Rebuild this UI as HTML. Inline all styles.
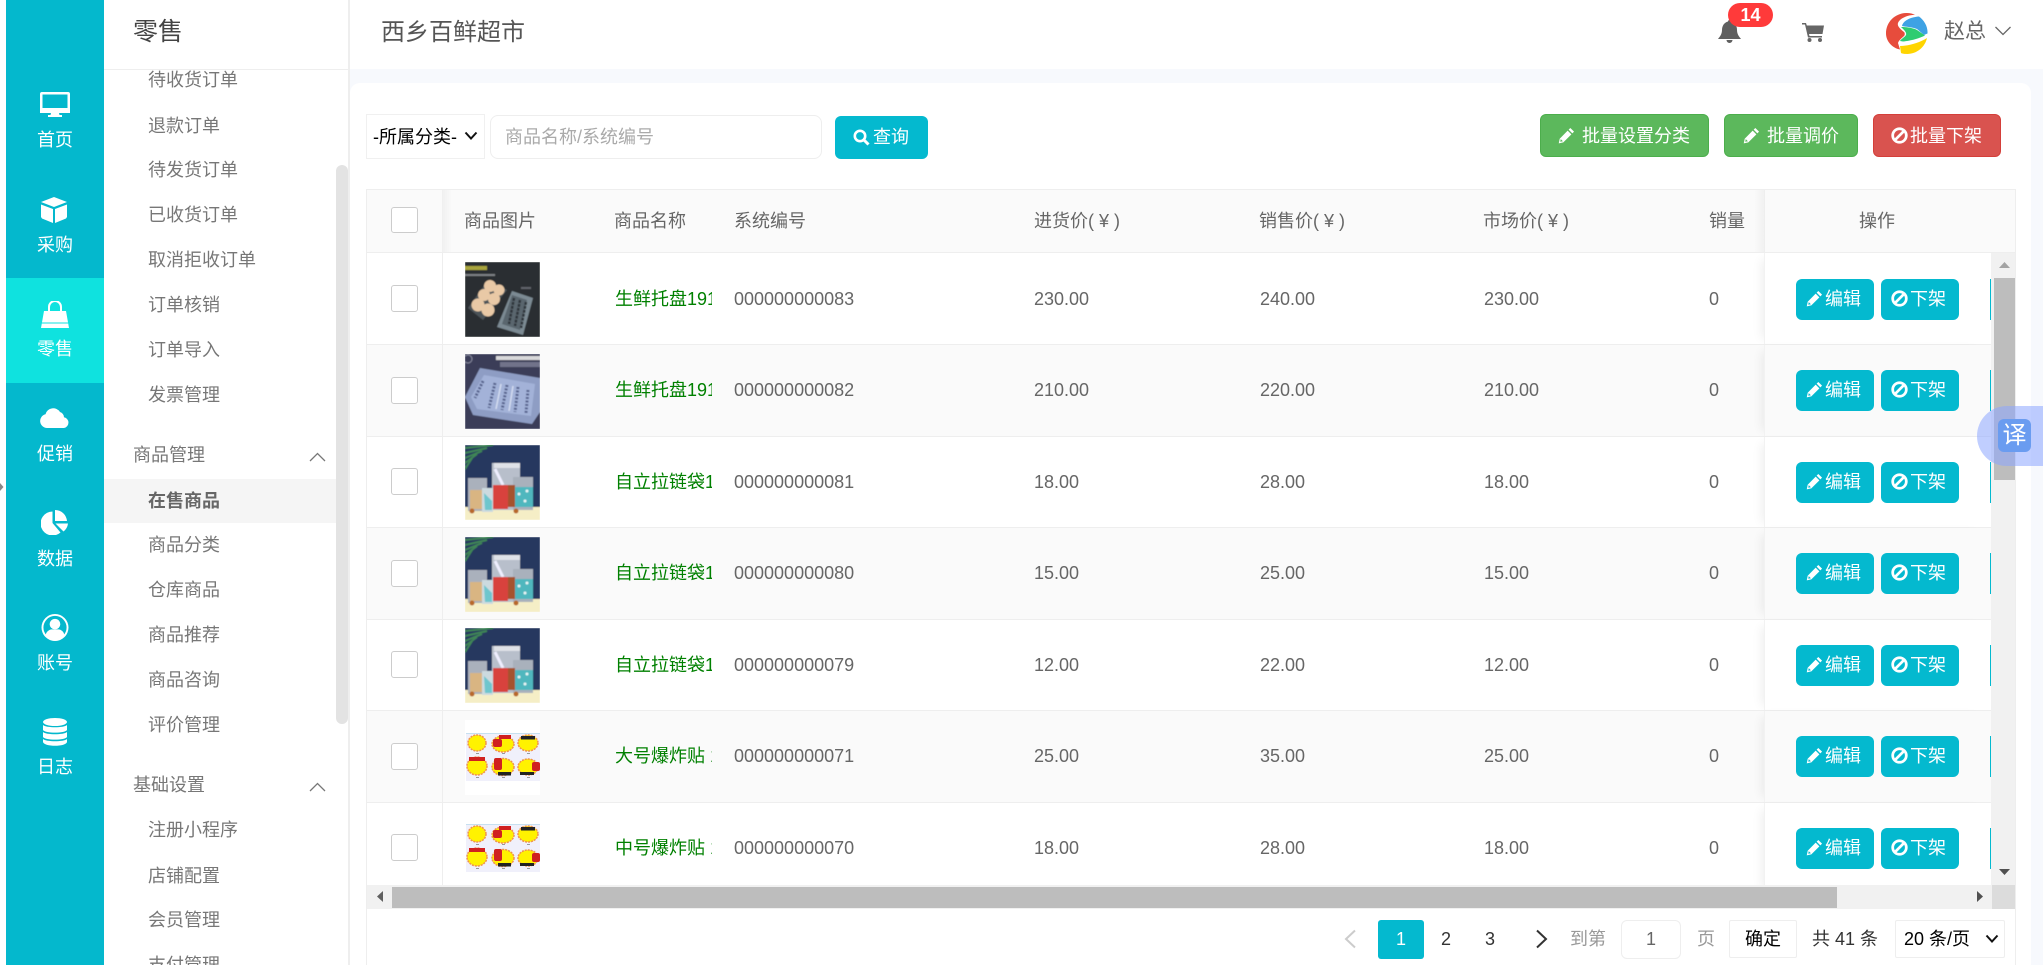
<!DOCTYPE html>
<html lang="zh"><head><meta charset="utf-8"><title>西乡百鲜超市</title>
<style>
*{box-sizing:border-box;margin:0;padding:0}
html,body{width:2043px;height:965px;overflow:hidden;background:#fff}
body{position:relative;font:18px/24px "Liberation Sans","Noto Sans CJK SC",sans-serif;color:#666}
.a{position:absolute}
.t{position:absolute;white-space:nowrap;line-height:24px}
#rail{left:6px;top:0;width:98px;height:965px;background:#04b8cd}
.rl{position:absolute;left:6px;width:98px;text-align:center;color:#fff;line-height:24px}
.ri{position:absolute;fill:#fff}
.m{position:absolute;line-height:24px;color:#777;white-space:nowrap}
.s{position:absolute;line-height:24px;color:#777}
#hdr{left:350px;top:0;width:1693px;height:69px;background:#fff}
#bg{left:350px;top:69px;width:1693px;height:896px;background:#f7f9fd}
#card{left:350px;top:83px;width:1681px;height:882px;background:#fff;border-radius:10px 10px 0 0}
.btn{position:absolute;border-radius:6px;color:#fff;white-space:nowrap}
.btn svg{position:absolute}
.btn span{position:absolute;line-height:24px}
#thead{left:366px;top:189px;width:1650px;height:64px;background:#fafafa;border:1px solid #eee}
.th{position:absolute;top:209px;line-height:24px;color:#666}
#b{left:367px;top:253px;width:1624px;height:632px;overflow:hidden}
.r{position:absolute;left:0;width:1624px;height:92px;border-top:1px solid #eee;background:#fff}
.r.o{background:#fafafa}
.r i{position:absolute;font-style:normal;top:0;line-height:91px;white-space:nowrap;color:#666}
.r i.n{left:248px;width:97px;overflow:hidden;color:#008000}
.ck{position:absolute;left:24px;width:27px;height:27px;border:1px solid #ccc;border-radius:3px;background:#fff}
.r svg.im{position:absolute;left:98px;width:75px;height:75px}
.cl{position:absolute;left:0;top:0;width:76px;height:92px;border-right:1px solid #eee}
.fx{position:absolute;left:1397px;top:0;width:227px;height:92px;border-left:1px solid #f2f2f2;background:inherit;box-shadow:-8px 0 10px -6px rgba(0,0,0,.07)}
.e{position:absolute;top:25px;width:78px;height:41px;background:#04b9cf;border-radius:6px;color:#fff;line-height:41px}
.e svg{position:absolute;left:10px;top:11px}
.e span{position:absolute;left:29px;top:0;white-space:nowrap}
.sl{position:absolute;left:225px;top:25px;width:1px;height:41px;background:#04b9cf}
</style></head><body>
<svg width="0" height="0" style="position:absolute"><defs>
<filter id="bl" x="0" y="0" width="100%" height="100%"><feGaussianBlur stdDeviation=".5"/></filter>
<symbol id="pen" viewBox="0 0 16 16"><path fill="#fff" d="M11.6.9l3.5 3.5-1.6 1.6-3.5-3.5zM9.1 3.4l3.5 3.500-7.600 7.600-4.300.9.900-4.400zM2.600 11.400l-.500 2.500 2.500-.500z"/></symbol>
<symbol id="ban" viewBox="0 0 16 16"><circle cx="8" cy="8" r="6.400" fill="none" stroke="#fff" stroke-width="2.600"/><path d="M3.600 12.400L12.400 3.600" stroke="#fff" stroke-width="2.600"/></symbol>
<symbol id="t1" viewBox="0 0 75 75"><g filter="url(#bl)"><rect width="75" height="75" fill="#2b2f33"/><rect x="0" y="4" width="22" height="4" fill="#a9a53c"/><rect x="0" y="12" width="30" height="2" fill="#7d8083"/><rect x="56" y="25" width="10" height="2" fill="#60646a"/><path d="M3 46L23 18 42 28 18 58Z" fill="#4c5359"/><g fill="#e9c9a6"><circle cx="25" cy="24" r="6"/><circle cx="34" cy="28" r="5.500"/><circle cx="19" cy="33" r="6"/><circle cx="29" cy="37" r="6"/><circle cx="13" cy="43" r="6.500"/><circle cx="23" cy="48" r="6.500"/></g><path d="M47 29L68 36 58 73 32 65Z" fill="#7b8a93"/><path d="M47 33L62 38 55 68 37 62Z" fill="#5a666e"/><path d="M49 36L44 62M55 38L50 64M61 40L56 66" stroke="#2e353a" stroke-width="2.500" stroke-dasharray="3 1"/></g></symbol>
<symbol id="t2" viewBox="0 0 75 75"><g filter="url(#bl)"><rect width="75" height="75" fill="#3a3d58"/><circle cx="3" cy="5" r="4" fill="none" stroke="#8a8ca0"/><rect x="31" y="2" width="44" height="4" fill="#d8d8da"/><rect x="35" y="8" width="40" height="5" fill="#71738a"/><path d="M15 14L75 24V58L67 70 8 61 0 43Z" fill="#8e9dc4"/><path d="M19 21L70 30 66 62 12 55 6 43Z" fill="#a3b2d8"/><g stroke="#54618b" stroke-width="3" stroke-dasharray="2 1.500"><path d="M30 29L24 54M42 31L37 56M53 33L50 58M18 27L10 44M63 36L61 59"/></g><g stroke="#d3dcf0" stroke-width="1.500"><path d="M36 30L31 55M48 32L44 57"/></g></g></symbol>
<symbol id="t3" viewBox="0 0 75 75"><g filter="url(#bl)"><rect width="75" height="75" fill="#26395f"/><rect y="62" width="75" height="13" fill="#f5eec6"/><g stroke="#3f8556" stroke-width="2" fill="none"><path d="M0 3L28 0M0 8L22 3M0 13L17 6M0 18L12 9M0 24L7 13"/></g><rect x="27" y="18" width="28" height="47" fill="#b8bfcb"/><rect x="29" y="18" width="26" height="5" fill="#dfe2e7"/><path d="M30 24L38 40" stroke="#eef" stroke-width="3"/><rect x="3" y="33" width="19" height="33" fill="#aab1bc"/><rect x="48" y="32" width="20" height="33" fill="#a9b1bc"/><rect x="5" y="45" width="12" height="19" fill="#d9b582"/><rect x="17" y="43" width="11" height="24" fill="#ccdadf"/><path d="M19 48L27 56V65H20Z" fill="#6ec6cd"/><rect x="28" y="40" width="15" height="24" fill="#d8423d"/><rect x="43" y="40" width="7" height="22" fill="#a5522d"/><rect x="50" y="42" width="18" height="20" fill="#4fb7be"/><g fill="#e6f5f5"><circle cx="54" cy="49" r="1.500"/><circle cx="62" cy="46" r="1.500"/><circle cx="60" cy="56" r="1.500"/></g><circle cx="7" cy="66" r="2.500" fill="#b8672a"/><circle cx="51" cy="66" r="2.500" fill="#b8672a"/></g></symbol>
<symbol id="t4" viewBox="0 0 75 75"><rect width="75" height="75" fill="#fff"/><rect x="1" y="13" width="74" height="48" fill="#f0f0fb"/><rect x="1" y="13" width="74" height="1" fill="#c7e0f0"/><g fill="#fff200" stroke="#f09050" stroke-width="1.500" stroke-dasharray="2 1"><ellipse cx="12" cy="23" rx="9" ry="8"/><ellipse cx="38" cy="24" rx="11" ry="8"/><ellipse cx="63" cy="23" rx="10" ry="8"/><ellipse cx="12" cy="46" rx="10" ry="9"/><ellipse cx="38" cy="47" rx="11" ry="8.500"/><ellipse cx="63" cy="47" rx="10" ry="8"/></g><g fill="#d02020"><rect x="28" y="19" width="9" height="8" rx="2"/><rect x="34" y="15" width="12" height="4"/><rect x="29" y="38" width="8" height="12" rx="2"/><rect x="67" y="42" width="8" height="9" rx="2"/><rect x="4" y="37" width="16" height="4"/></g><g fill="#222"><rect x="56" y="16" width="14" height="3.500"/><rect x="33" y="52" width="13" height="3.500"/><rect x="55" y="52" width="14" height="3"/></g><g fill="#999"><rect x="11" y="33" width="3" height="1"/><rect x="37" y="33" width="3" height="1"/><rect x="62" y="33" width="3" height="1"/><rect x="11" y="57" width="3" height="1"/><rect x="37" y="57" width="3" height="1"/><rect x="62" y="57" width="3" height="1"/></g></symbol>
</defs></svg>

<div class="a" id="rail"></div>
<div class="a" style="left:6px;top:278px;width:98px;height:105px;background:#0fe2df"></div>
<svg class="a" style="left:0;top:481px" width="4" height="12"><path d="M0 2l3.500 4L0 10z" fill="#888"/></svg>

<svg class="ri" style="left:40px;top:92px" width="30" height="25" viewBox="0 0 30 25"><path fill-rule="evenodd" d="M2 0h26a2 2 0 0 1 2 2v17a2 2 0 0 1-2 2H19l.500 2H22v2H8v-2h2.500l.500-2H2a2 2 0 0 1-2-2V2a2 2 0 0 1 2-2zM2.500 2.500v13.500h25V2.500z"/><rect x="0" y="17" width="30" height="4"/></svg>
<svg class="ri" style="left:41px;top:197px" width="26" height="26" viewBox="0 0 26 26"><path d="M13 0L26 5 13 10 0 5zM0 7.500L12 12v14L1 21.500 0 20zM26 7.500L14 12v14l11-4.500 1-1.500z"/></svg>
<svg class="ri" style="left:41px;top:301px" width="28" height="27" viewBox="0 0 28 27"><path fill-rule="evenodd" d="M3 10h4V6a7 7 0 0 1 14 0v4h4l3 17H0zM9 10h10V6a5 5 0 0 0-10 0z"/><rect y="21.500" width="28" height="1" fill="#0fe2df"/></svg>
<svg class="ri" style="left:40px;top:407px" width="30" height="21" viewBox="0 0 30 21"><path d="M7 21a7 7 0 0 1-1.500-13.800A8 8 0 0 1 20 5a5.500 5.500 0 0 1 4 5.200A5.500 5.500 0 0 1 24 21z"/></svg>
<svg class="ri" style="left:41px;top:510px" width="27" height="25" viewBox="0 0 27 25"><path d="M11.500 1.500V13l8 9.500A12 12 0 1 1 11.500 1.500zM14 0a12 12 0 0 1 12 11H14zM14.500 13.500H27a12 12 0 0 1-4.500 8z"/></svg>
<svg class="ri" style="left:41px;top:614px" width="28" height="27" viewBox="0 0 28 28"><path fill-rule="evenodd" d="M14 0a14 14 0 1 1 0 28 14 14 0 0 1 0-28zM14 2a12 12 0 1 0 0 24 12 12 0 0 0 0-24z"/><circle cx="14" cy="10.500" r="5.500"/><path d="M4 22.500c1-5 5-6.500 6.500-6.500h7c2 0 5.500 1.500 6.500 6.500a12 12 0 0 1-20 0z"/></svg>
<svg class="ri" style="left:43px;top:718px" width="24" height="28" viewBox="0 0 24 28"><ellipse cx="12" cy="4" rx="12" ry="4"/><path d="M0 7c3 3 21 3 24 0v5c-2 3.500-22 3.500-24 0zM0 14c3 3 21 3 24 0v5c-2 3.500-22 3.500-24 0zM0 21c3 3 21 3 24 0v3c-1 5-23 5-24 0z"/></svg>

<div class="rl" style="top:128px">首页</div><div class="rl" style="top:233px">采购</div><div class="rl" style="top:337px">零售</div><div class="rl" style="top:442px">促销</div><div class="rl" style="top:547px">数据</div><div class="rl" style="top:651px">账号</div><div class="rl" style="top:755px">日志</div>

<!-- sidebar -->
<div class="a" style="left:348px;top:0;width:2px;height:965px;background:#eeeeee"></div>
<div class="t" style="left:133px;top:18px;font-size:25px;line-height:28px;color:#444">零售</div>
<div class="a" style="left:104px;top:69px;width:244px;height:1px;background:#eee"></div>
<div class="a" style="left:104px;top:479px;width:232px;height:44px;background:#f5f5f5"></div>
<div class="a" style="left:336px;top:165px;width:12px;height:559px;background:#e3e3e3;border-radius:6px"></div>
<div class="a" style="left:104px;top:70px;width:232px;height:895px;overflow:hidden">
<div class="m" style="left:44px;top:-2px">待收货订单</div>
<div class="m" style="left:44px;top:44px">退款订单</div>
<div class="m" style="left:44px;top:88px">待发货订单</div>
<div class="m" style="left:44px;top:133px">已收货订单</div>
<div class="m" style="left:44px;top:178px">取消拒收订单</div>
<div class="m" style="left:44px;top:223px">订单核销</div>
<div class="m" style="left:44px;top:268px">订单导入</div>
<div class="m" style="left:44px;top:313px">发票管理</div>
<div class="s" style="left:29px;top:373px">商品管理</div>
<div class="m" style="left:44px;top:419px;font-weight:bold;color:#666">在售商品</div>
<div class="m" style="left:44px;top:463px">商品分类</div>
<div class="m" style="left:44px;top:508px">仓库商品</div>
<div class="m" style="left:44px;top:553px">商品推荐</div>
<div class="m" style="left:44px;top:598px">商品咨询</div>
<div class="m" style="left:44px;top:643px">评价管理</div>
<div class="s" style="left:29px;top:703px">基础设置</div>
<div class="m" style="left:44px;top:748px">注册小程序</div>
<div class="m" style="left:44px;top:794px">店铺配置</div>
<div class="m" style="left:44px;top:838px">会员管理</div>
<div class="m" style="left:44px;top:883px">支付管理</div>
</div>
<svg class="a" style="left:309px;top:452px" width="17" height="10"><path d="M1 9l7.500-7.500L16 9" fill="none" stroke="#777" stroke-width="1.300"/></svg>
<svg class="a" style="left:309px;top:782px" width="17" height="10"><path d="M1 9l7.500-7.500L16 9" fill="none" stroke="#777" stroke-width="1.300"/></svg>

<!-- header -->
<div class="a" id="bg"></div><div class="a" id="hdr"></div><div class="a" id="card"></div>
<div class="t" style="left:381px;top:19px;font-size:24px;line-height:28px;color:#555">西乡百鲜超市</div>
<svg class="a" style="left:1718px;top:20px" width="23" height="23" viewBox="0 0 23 23"><path fill="#5f5f5f" d="M11.500 0c1 0 1.500.7 1.500 1.500C17 2.500 19 6 19 10c0 4 2 6.500 4 9H0c2-2.500 4-5 4-9 0-4 2-7.500 6-8.500 0-.8.500-1.500 1.500-1.500zM8.500 20h6a3 3 0 0 1-6 0z"/></svg>
<div class="a" style="left:1728px;top:3px;width:45px;height:24px;border-radius:12px;background:#ff3a3a;color:#fff;font-weight:bold;font-size:18px;line-height:24px;text-align:center">14</div>
<svg class="a" style="left:1802px;top:23px" width="22" height="19" viewBox="0 0 22 19"><path fill="#666" d="M0 0h4l.8 2.500H22l-1.500 8.500H7l.5 2H20v1.500H6L3 1.500H0z"/><circle cx="7.500" cy="17" r="2" fill="#666"/><circle cx="18" cy="17" r="2" fill="#666"/></svg>
<svg class="a" style="left:1886px;top:13px" width="42" height="41" viewBox="0 0 42 41"><path fill="#e74c3c" d="M21 0c3 0 6 .8 8 1.800C22 2 14 5 12 10c-1 3 2 6 6 9 1 1 1 3 0 4-2 2-5 4-6 7l2 6.500C6 35 0 28 0 20.500 0 9 9 0 21 0z"/><path fill="#3ea2e4" d="M16 13C17 7 26 4 33 3.500c5 3.500 9 10 8.500 17L38 22l-7-6c-5-2-11-2-15-3z"/><path fill="#2ecc71" d="M15 14c6 0 12 1 16 3l8 5.500c-6 3-13 5-22 6l-3-.5c1-2 5-4 6-6 1-3-3-6-5-8z"/><path fill="#ffd500" d="M41 25c-2 9-10 16-20 16-3 0-5-.5-6-1l-1-7c8 0 19-3 27-8z"/></svg>
<div class="t" style="left:1944px;top:19px;font-size:21px;line-height:26px;color:#666">赵总</div>
<svg class="a" style="left:1995px;top:26px" width="16" height="10"><path d="M.5 1l7.500 7.500L15.500 1" fill="none" stroke="#666" stroke-width="1.300"/></svg>

<!-- filters -->
<div class="a" style="left:366px;top:114px;width:119px;height:45px;border:1px solid #f0f0f0;background:#fff"></div>
<div class="t" style="left:373px;top:125px;color:#000">-所属分类-</div>
<svg class="a" style="left:464px;top:131px" width="14" height="10"><path d="M1.500 1.500L7 7.500l5.500-6" fill="none" stroke="#111" stroke-width="2"/></svg>
<div class="a" style="left:490px;top:115px;width:332px;height:44px;border:1px solid #eee;border-radius:8px;background:#fff"></div>
<div class="t" style="left:505px;top:125px;color:#aaa">商品名称/系统编号</div>
<div class="btn" style="left:835px;top:116px;width:93px;height:43px;background:#04b9cf">
<svg style="left:18px;top:13px" width="17" height="17" viewBox="0 0 17 17"><circle cx="7" cy="7" r="5.200" fill="none" stroke="#fff" stroke-width="2.600"/><path d="M10.500 10.500L15.500 15.500" stroke="#fff" stroke-width="3"/></svg><span style="left:38px;top:9px">查询</span></div>

<div class="btn" style="left:1540px;top:114px;width:169px;height:43px;background:#5cb85c;border:1px solid #4cae4c">
<svg style="left:17px;top:12px" width="17" height="17"><use href="#pen"/></svg><span style="left:41px;top:9px">批量设置分类</span></div>
<div class="btn" style="left:1724px;top:114px;width:134px;height:43px;background:#5cb85c;border:1px solid #4cae4c">
<svg style="left:18px;top:12px" width="17" height="17"><use href="#pen"/></svg><span style="left:42px;top:9px">批量调价</span></div>
<div class="btn" style="left:1873px;top:114px;width:128px;height:43px;background:#d9534f;border:1px solid #d43f3a">
<svg style="left:17px;top:12px" width="17" height="17"><use href="#ban"/></svg><span style="left:36px;top:9px">批量下架</span></div>

<!-- table -->
<div class="a" style="left:366px;top:189px;width:1px;height:776px;background:#eee"></div>
<div class="a" style="left:2015px;top:189px;width:1px;height:776px;background:#eee"></div>
<div class="a" id="thead"></div>
<div class="a" style="left:442px;top:190px;width:10px;height:62px;background:linear-gradient(90deg,#f0f0f0,#fafafa)"></div>
<div class="a" style="left:1754px;top:190px;width:10px;height:62px;background:linear-gradient(90deg,#fafafa,#f1f1f1)"></div>
<div class="a" style="left:1764px;top:190px;width:1px;height:62px;background:#eee"></div>
<div class="a" style="left:391px;top:207px;width:27px;height:26px;border:1px solid #ccc;border-radius:3px;background:#fff"></div>
<div class="th" style="left:464px">商品图片</div><div class="th" style="left:614px">商品名称</div><div class="th" style="left:734px">系统编号</div><div class="th" style="left:1034px">进货价( ¥ )</div><div class="th" style="left:1259px">销售价( ¥ )</div><div class="th" style="left:1483px">市场价( ¥ )</div><div class="th" style="left:1709px">销量</div><div class="th" style="left:1859px">操作</div>

<div class="a" id="b">
<div class="r" style="top:0;border-top:0"><div class="cl"></div><div class="ck" style="top:32px"></div><svg class="im" style="top:9px"><use href="#t1"/></svg><i class="n" style="top:1px">生鲜托盘191212</i><i style="left:367px;top:1px">000000000083</i><i style="left:667px;top:1px">230.00</i><i style="left:893px;top:1px">240.00</i><i style="left:1117px;top:1px">230.00</i><i style="left:1342px;top:1px">0</i><div class="fx"><div class="e" style="left:31px;top:26px"><svg width="17" height="17"><use href="#pen"/></svg><span>编辑</span></div><div class="e" style="left:116px;top:26px"><svg width="17" height="17"><use href="#ban"/></svg><span>下架</span></div><div class="sl" style="top:26px"></div></div></div>
<div class="r o" style="top:91px"><div class="cl"></div><div class="ck" style="top:32px"></div><svg class="im" style="top:9px"><use href="#t2"/></svg><i class="n">生鲜托盘191212</i><i style="left:367px">000000000082</i><i style="left:667px">210.00</i><i style="left:893px">220.00</i><i style="left:1117px">210.00</i><i style="left:1342px">0</i><div class="fx"><div class="e" style="left:31px"><svg width="17" height="17"><use href="#pen"/></svg><span>编辑</span></div><div class="e" style="left:116px"><svg width="17" height="17"><use href="#ban"/></svg><span>下架</span></div><div class="sl"></div></div></div>
<div class="r" style="top:183px"><div class="cl"></div><div class="ck" style="top:31px"></div><svg class="im" style="top:8px"><use href="#t3"/></svg><i class="n">自立拉链袋1212</i><i style="left:367px">000000000081</i><i style="left:667px">18.00</i><i style="left:893px">28.00</i><i style="left:1117px">18.00</i><i style="left:1342px">0</i><div class="fx"><div class="e" style="left:31px"><svg width="17" height="17"><use href="#pen"/></svg><span>编辑</span></div><div class="e" style="left:116px"><svg width="17" height="17"><use href="#ban"/></svg><span>下架</span></div><div class="sl"></div></div></div>
<div class="r o" style="top:274px"><div class="cl"></div><div class="ck" style="top:32px"></div><svg class="im" style="top:9px"><use href="#t3"/></svg><i class="n">自立拉链袋1212</i><i style="left:367px">000000000080</i><i style="left:667px">15.00</i><i style="left:893px">25.00</i><i style="left:1117px">15.00</i><i style="left:1342px">0</i><div class="fx"><div class="e" style="left:31px"><svg width="17" height="17"><use href="#pen"/></svg><span>编辑</span></div><div class="e" style="left:116px"><svg width="17" height="17"><use href="#ban"/></svg><span>下架</span></div><div class="sl"></div></div></div>
<div class="r" style="top:366px"><div class="cl"></div><div class="ck" style="top:31px"></div><svg class="im" style="top:8px"><use href="#t3"/></svg><i class="n">自立拉链袋1212</i><i style="left:367px">000000000079</i><i style="left:667px">12.00</i><i style="left:893px">22.00</i><i style="left:1117px">12.00</i><i style="left:1342px">0</i><div class="fx"><div class="e" style="left:31px"><svg width="17" height="17"><use href="#pen"/></svg><span>编辑</span></div><div class="e" style="left:116px"><svg width="17" height="17"><use href="#ban"/></svg><span>下架</span></div><div class="sl"></div></div></div>
<div class="r o" style="top:457px"><div class="cl"></div><div class="ck" style="top:32px"></div><svg class="im" style="top:9px"><use href="#t4"/></svg><i class="n">大号爆炸贴 1</i><i style="left:367px">000000000071</i><i style="left:667px">25.00</i><i style="left:893px">35.00</i><i style="left:1117px">25.00</i><i style="left:1342px">0</i><div class="fx"><div class="e" style="left:31px"><svg width="17" height="17"><use href="#pen"/></svg><span>编辑</span></div><div class="e" style="left:116px"><svg width="17" height="17"><use href="#ban"/></svg><span>下架</span></div><div class="sl"></div></div></div>
<div class="r" style="top:549px"><div class="cl"></div><div class="ck" style="top:31px"></div><svg class="im" style="top:8px"><use href="#t4"/></svg><i class="n">中号爆炸贴 1</i><i style="left:367px">000000000070</i><i style="left:667px">18.00</i><i style="left:893px">28.00</i><i style="left:1117px">18.00</i><i style="left:1342px">0</i><div class="fx"><div class="e" style="left:31px"><svg width="17" height="17"><use href="#pen"/></svg><span>编辑</span></div><div class="e" style="left:116px"><svg width="17" height="17"><use href="#ban"/></svg><span>下架</span></div><div class="sl"></div></div></div>
</div>

<!-- scrollbars -->
<div class="a" style="left:1991px;top:253px;width:24px;height:632px;background:#f1f1f1"></div>
<div class="a" style="left:1994px;top:278px;width:21px;height:202px;background:#bdbdbd"></div>
<svg class="a" style="left:1999px;top:261px" width="12" height="8"><path d="M0 7h11L5.500 1z" fill="#a3a3a3"/></svg>
<svg class="a" style="left:1999px;top:868px" width="12" height="8"><path d="M0 1h11L5.500 7z" fill="#505050"/></svg>
<div class="a" style="left:367px;top:885px;width:1625px;height:24px;background:#f1f1f1"></div>
<div class="a" style="left:392px;top:887px;width:1445px;height:21px;background:#bdbdbd"></div>
<svg class="a" style="left:376px;top:891px" width="8" height="12"><path d="M7 0v11L1 5.500z" fill="#606060"/></svg>
<svg class="a" style="left:1976px;top:891px" width="8" height="12"><path d="M1 0v11L7 5.500z" fill="#505050"/></svg>
<div class="a" style="left:1992px;top:885px;width:23px;height:24px;background:#dcdcdc"></div>

<!-- pagination -->
<svg class="a" style="left:1343px;top:929px" width="14" height="20"><path d="M12 1.500L3 10l9 8.500" fill="none" stroke="#ccc" stroke-width="2"/></svg>
<div class="a" style="left:1378px;top:920px;width:46px;height:39px;background:#04b9cf;border-radius:3px;color:#fff;text-align:center;line-height:39px">1</div>
<div class="t" style="left:1423px;top:927px;width:46px;text-align:center;color:#333">2</div>
<div class="t" style="left:1467px;top:927px;width:46px;text-align:center;color:#333">3</div>
<svg class="a" style="left:1535px;top:929px" width="14" height="20"><path d="M2 1.500L11 10l-9 8.500" fill="none" stroke="#333" stroke-width="2"/></svg>
<div class="t" style="left:1570px;top:927px;color:#999">到第</div>
<div class="a" style="left:1621px;top:920px;width:60px;height:39px;border:1px solid #eee;border-radius:6px;text-align:center;line-height:37px;color:#666">1</div>
<div class="t" style="left:1697px;top:927px;color:#999">页</div>
<div class="a" style="left:1729px;top:920px;width:68px;height:38px;border:1px solid #eee;border-radius:2px;text-align:center;line-height:37px;color:#000">确定</div>
<div class="t" style="left:1812px;top:927px;color:#333">共 41 条</div>
<div class="a" style="left:1895px;top:920px;width:110px;height:38px;border:1px solid #eee;border-radius:2px"></div>
<div class="t" style="left:1904px;top:927px;color:#000">20 条/页</div>
<svg class="a" style="left:1985px;top:934px" width="14" height="10"><path d="M1.500 1.500L7 7.500l5.500-6" fill="none" stroke="#111" stroke-width="2"/></svg>

<!-- translate float -->
<div class="a" style="left:1977px;top:406px;width:66px;height:60px;border-radius:30px 0 0 30px;background:rgba(140,165,255,.55)"></div>
<div class="a" style="left:1998px;top:419px;width:33px;height:33px;border-radius:6px;background:#6a9cf0;color:#fff;font-size:24px;line-height:33px;text-align:center">译</div>
</body></html>
